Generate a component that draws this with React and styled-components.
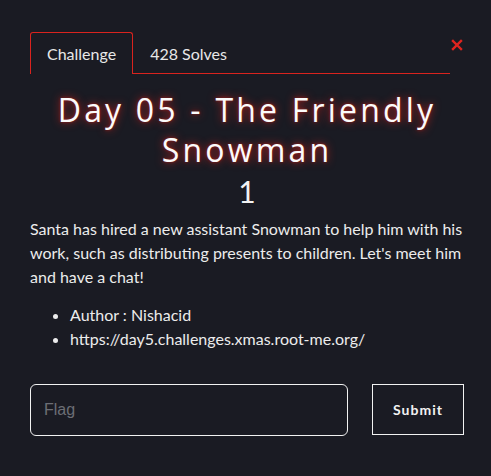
import React from "react";
import styled, { createGlobalStyle } from "styled-components";

const Global = createGlobalStyle`
  body {
    margin: 0;
    background: #1a1b23;
    color: #f2f2f2;
    font-family: Lato, "Liberation Sans", sans-serif;
  }
`;

const Modal = styled.div`
  padding: 32px 27px 0 30px;
`;

const Header = styled.div`
  display: flex;
  align-items: flex-start;
`;

const Tabs = styled.div`
  flex: 1;
  display: flex;
  border-bottom: 1px solid #d9231e;
`;

const Tab = styled.div`
  height: 41px;
  padding: 0 16px;
  display: flex;
  align-items: center;
  font-size: 16px;
  color: #e8e8e8;
  border: 1px solid ${(p) => (p.$active ? "#d9231e" : "transparent")};
  border-bottom: none;
  border-radius: 3px 3px 0 0;
  margin-bottom: -1px;
  background: ${(p) => (p.$active ? "#1a1b23" : "transparent")};
`;

const Close = styled.div`
  width: 14px;
  margin-top: 7px;
  display: flex;
  justify-content: center;
`;

const Title = styled.h1`
  margin: 16px 0 0;
  text-align: center;
  font-family: "Open Sans", sans-serif;
  font-weight: 400;
  font-size: 32px;
  line-height: 40px;
  letter-spacing: 3.2px;
  color: #fbfbfb;
  text-shadow: 0 0 8px #c0231f, 0 0 3px #8a1a17;
`;

const Value = styled.div`
  text-align: center;
  font-size: 30px;
  font-weight: 400;
  line-height: 36px;
  margin-top: 3px;
  color: #f2f2f2;
`;

const Text = styled.p`
  margin: 8px 0 0;
  font-size: 16px;
  line-height: 24px;
  color: #ececec;
`;

const List = styled.ul`
  margin: 14px 0 0;
  padding-left: 40px;
  font-size: 16px;
  line-height: 24px;
  color: #ececec;
`;

const Form = styled.div`
  display: flex;
  align-items: flex-start;
  gap: 24px;
  margin-top: 33px;
`;

const Input = styled.input`
  width: 318px;
  height: 52px;
  box-sizing: border-box;
  background: transparent;
  border: 1px solid #f2f2f2;
  border-radius: 6px;
  padding: 0 13px;
  font-family: "Liberation Sans", sans-serif;
  font-size: 16px;
  color: #f2f2f2;
  outline: none;
  &::placeholder {
    color: #6c6e75;
  }
`;

const Button = styled.button`
  width: 92px;
  height: 51px;
  box-sizing: border-box;
  background: transparent;
  border: 1px solid #f2f2f2;
  border-radius: 0;
  color: #f2f2f2;
  font-family: Lato, sans-serif;
  font-weight: 700;
  font-size: 14px;
  letter-spacing: 1px;
`;

export default function App() {
  return (
    <>
      <Global />
      <Modal>
        <Header>
          <Tabs>
            <Tab $active>Challenge</Tab>
            <Tab>428 Solves</Tab>
          </Tabs>
          <Close>
            <svg width="12" height="12" viewBox="0 0 12 12">
              <path d="M2 2L10 10M10 2L2 10" stroke="#e0241f" strokeWidth="2.4" strokeLinecap="square" />
            </svg>
          </Close>
        </Header>
        <Title>
          Day 05 - The Friendly
          <br />
          Snowman
        </Title>
        <Value>1</Value>
        <Text>
          Santa has hired a new assistant Snowman to help him with his work, such as
          distributing presents to children. Let's meet him and have a chat!
        </Text>
        <List>
          <li>Author : Nishacid</li>
          <li>https://day5.challenges.xmas.root-me.org/</li>
        </List>
        <Form>
          <Input placeholder="Flag" />
          <Button>Submit</Button>
        </Form>
      </Modal>
    </>
  );
}
